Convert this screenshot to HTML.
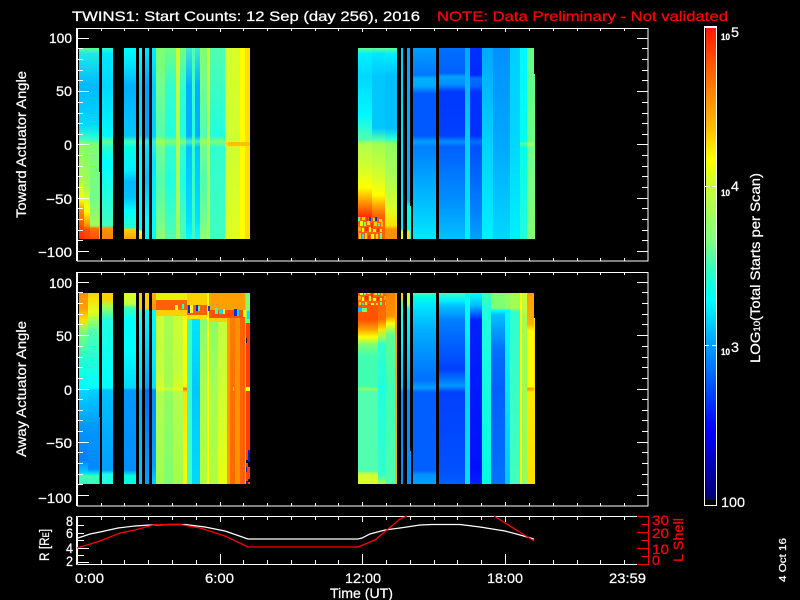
<!DOCTYPE html>
<html><head><meta charset="utf-8"><title>TWINS1 Start Counts</title>
<style>
html,body{margin:0;padding:0;background:#000;width:800px;height:600px;overflow:hidden}
svg{display:block}
text{font-family:"Liberation Sans",sans-serif;font-size:14px;fill:#fff;stroke:#fff;stroke-width:.25}
.r{fill:#f00;stroke:#f00}
.s{font-size:9px;font-weight:bold}
.d rect{shape-rendering:crispEdges}
path{fill:none}
.c{shape-rendering:crispEdges;stroke:#fff;stroke-width:1}
</style></head><body>
<svg width="800" height="600" viewBox="0 0 800 600" xmlns="http://www.w3.org/2000/svg">
<defs>
<linearGradient id="cb" x2="0" y2="1"><stop offset="0" stop-color="#ff1800"/><stop offset=".13" stop-color="#ff8000"/><stop offset=".21" stop-color="#ffbb00"/><stop offset=".28" stop-color="#ffff00"/><stop offset=".335" stop-color="#c8ff30"/><stop offset=".45" stop-color="#80ff80"/><stop offset=".51" stop-color="#30ffc0"/><stop offset=".575" stop-color="#00ffff"/><stop offset=".67" stop-color="#00a0ff"/><stop offset=".85" stop-color="#0000ff"/><stop offset="1" stop-color="#000070"/></linearGradient>

<linearGradient id="t1" x2="0" y2="1"><stop offset="0" stop-color="#60ff90"/><stop offset=".03" stop-color="#20e8e8"/><stop offset=".2" stop-color="#00b8ff"/><stop offset=".4" stop-color="#00d8ff"/><stop offset=".48" stop-color="#40ffc0"/><stop offset=".5" stop-color="#90ff60"/><stop offset=".675" stop-color="#a0ff50"/><stop offset=".795" stop-color="#ffff00"/><stop offset=".85" stop-color="#ff9000"/><stop offset=".95" stop-color="#ff4000"/><stop offset="1" stop-color="#ff3000"/></linearGradient>
<linearGradient id="t2" x2="0" y2="1"><stop offset="0" stop-color="#60ff90"/><stop offset=".03" stop-color="#20e8e8"/><stop offset=".2" stop-color="#00b8ff"/><stop offset=".4" stop-color="#00d8ff"/><stop offset=".48" stop-color="#40ffc0"/><stop offset=".5" stop-color="#80ff70"/><stop offset=".72" stop-color="#a0ff50"/><stop offset=".85" stop-color="#ffff00"/><stop offset=".93" stop-color="#ff9000"/><stop offset=".95" stop-color="#ff5000"/><stop offset="1" stop-color="#ff4000"/></linearGradient>
<linearGradient id="t3" x2="0" y2="1"><stop offset="0" stop-color="#60ff90"/><stop offset=".03" stop-color="#20e8e8"/><stop offset=".2" stop-color="#00b8ff"/><stop offset=".4" stop-color="#00d8ff"/><stop offset=".48" stop-color="#30ffd0"/><stop offset=".5" stop-color="#80ff70"/><stop offset=".78" stop-color="#70ff90"/><stop offset=".93" stop-color="#a0ff50"/><stop offset=".945" stop-color="#ff7000"/><stop offset="1" stop-color="#ff5000"/></linearGradient>
<linearGradient id="t4" x2="0" y2="1"><stop offset="0" stop-color="#30ffd0"/><stop offset=".03" stop-color="#00e8ff"/><stop offset=".2" stop-color="#00d8ff"/><stop offset=".46" stop-color="#00f8ff"/><stop offset=".49" stop-color="#60ff90"/><stop offset=".52" stop-color="#20ffd0"/><stop offset=".6" stop-color="#00ffff"/><stop offset=".93" stop-color="#40ffc0"/><stop offset=".945" stop-color="#ff9000"/><stop offset="1" stop-color="#ff8000"/></linearGradient>
<linearGradient id="t5" x2="0" y2="1"><stop offset="0" stop-color="#00ffff"/><stop offset=".1" stop-color="#00e0ff"/><stop offset=".2" stop-color="#00b0ff"/><stop offset=".46" stop-color="#00c8ff"/><stop offset=".49" stop-color="#40ffc0"/><stop offset=".52" stop-color="#00ffe0"/><stop offset=".64" stop-color="#00f0ff"/><stop offset=".7" stop-color="#00b8ff"/><stop offset=".78" stop-color="#00c0ff"/><stop offset=".85" stop-color="#00ffff"/><stop offset=".94" stop-color="#20ffd0"/><stop offset=".95" stop-color="#ffd000"/><stop offset="1" stop-color="#ffa000"/></linearGradient>
<linearGradient id="t6" x2="0" y2="1"><stop offset="0" stop-color="#00ffff"/><stop offset=".2" stop-color="#00d8ff"/><stop offset=".46" stop-color="#00e0ff"/><stop offset=".49" stop-color="#40ffc0"/><stop offset=".52" stop-color="#00ffff"/><stop offset=".95" stop-color="#00ffff"/><stop offset=".96" stop-color="#ffff00"/><stop offset="1" stop-color="#ffd000"/></linearGradient>
<linearGradient id="t7" x2="0" y2="1"><stop offset="0" stop-color="#00e8ff"/><stop offset=".2" stop-color="#00a0ff"/><stop offset=".46" stop-color="#00a0ff"/><stop offset=".49" stop-color="#30e8e0"/><stop offset=".52" stop-color="#00e0ff"/><stop offset=".7" stop-color="#00c0ff"/><stop offset=".9" stop-color="#00ffff"/><stop offset="1" stop-color="#00ffff"/></linearGradient>
<linearGradient id="t8" x2="0" y2="1"><stop offset="0" stop-color="#00f0ff"/><stop offset=".2" stop-color="#00d0ff"/><stop offset=".46" stop-color="#00d0ff"/><stop offset=".49" stop-color="#30f0e0"/><stop offset=".6" stop-color="#00e8ff"/><stop offset="1" stop-color="#00ffff"/></linearGradient>
<linearGradient id="t9" x2="0" y2="1"><stop offset="0" stop-color="#80ff70"/><stop offset=".2" stop-color="#70ff90"/><stop offset=".46" stop-color="#50ffb0"/><stop offset=".49" stop-color="#a0ff50"/><stop offset=".52" stop-color="#70ff90"/><stop offset=".7" stop-color="#50ffb0"/><stop offset=".9" stop-color="#70ff90"/><stop offset="1" stop-color="#90ff70"/></linearGradient>
<linearGradient id="t9b" x2="0" y2="1"><stop offset="0" stop-color="#70ff80"/><stop offset=".2" stop-color="#30ffd0"/><stop offset=".46" stop-color="#20ffe0"/><stop offset=".49" stop-color="#80ff70"/><stop offset=".52" stop-color="#30ffd0"/><stop offset=".7" stop-color="#20ffe0"/><stop offset="1" stop-color="#50ffb0"/></linearGradient>
<linearGradient id="t10" x2="0" y2="1"><stop offset="0" stop-color="#d0ff30"/><stop offset=".5" stop-color="#b0ff50"/><stop offset="1" stop-color="#a0ff60"/></linearGradient>
<linearGradient id="t12" x2="0" y2="1"><stop offset="0" stop-color="#40e8d0"/><stop offset=".2" stop-color="#00b0ff"/><stop offset=".46" stop-color="#00b0ff"/><stop offset=".49" stop-color="#40f0d0"/><stop offset=".52" stop-color="#00c0ff"/><stop offset=".9" stop-color="#00e0ff"/><stop offset="1" stop-color="#00ffff"/></linearGradient>
<linearGradient id="t13" x2="0" y2="1"><stop offset="0" stop-color="#50ffb0"/><stop offset=".46" stop-color="#20ffe0"/><stop offset=".49" stop-color="#80ff70"/><stop offset=".52" stop-color="#30ffd0"/><stop offset="1" stop-color="#40ffc0"/></linearGradient>
<linearGradient id="t16" x2="0" y2="1"><stop offset="0" stop-color="#d8ff28"/><stop offset=".49" stop-color="#d0ff30"/><stop offset=".5" stop-color="#ffd000"/><stop offset=".52" stop-color="#d0ff30"/><stop offset="1" stop-color="#e0ff20"/></linearGradient>

<linearGradient id="s1" x2="0" y2="1"><stop offset="0" stop-color="#60ff90"/><stop offset=".03" stop-color="#00f0ff"/><stop offset=".15" stop-color="#00d8ff"/><stop offset=".35" stop-color="#00f8ff"/><stop offset=".48" stop-color="#50ffb0"/><stop offset=".5" stop-color="#b0ff50"/><stop offset=".62" stop-color="#d0ff30"/><stop offset=".73" stop-color="#ffff00"/><stop offset=".8" stop-color="#ffa000"/><stop offset=".88" stop-color="#ff3000"/><stop offset="1" stop-color="#ff5000"/></linearGradient>
<linearGradient id="s2" x2="0" y2="1"><stop offset="0" stop-color="#60ff90"/><stop offset=".03" stop-color="#00e8ff"/><stop offset=".15" stop-color="#00c8ff"/><stop offset=".42" stop-color="#00c8ff"/><stop offset=".48" stop-color="#50ffb0"/><stop offset=".5" stop-color="#a0ff50"/><stop offset=".66" stop-color="#d0ff30"/><stop offset=".77" stop-color="#ffff00"/><stop offset=".83" stop-color="#ffa000"/><stop offset=".88" stop-color="#ff6000"/><stop offset="1" stop-color="#ff6000"/></linearGradient>
<linearGradient id="s3" x2="0" y2="1"><stop offset="0" stop-color="#60ff90"/><stop offset=".03" stop-color="#00f0ff"/><stop offset=".15" stop-color="#00c0ff"/><stop offset=".42" stop-color="#00c0ff"/><stop offset=".48" stop-color="#30ffd0"/><stop offset=".5" stop-color="#90ff60"/><stop offset=".7" stop-color="#b0ff50"/><stop offset=".85" stop-color="#e0ff20"/><stop offset=".93" stop-color="#ffe000"/><stop offset=".95" stop-color="#ff9000"/><stop offset="1" stop-color="#ff9000"/></linearGradient>
<linearGradient id="s4" x2="0" y2="1"><stop offset="0" stop-color="#00d0ff"/><stop offset=".95" stop-color="#00e8ff"/><stop offset=".96" stop-color="#e8ff10"/><stop offset="1" stop-color="#f0ff00"/></linearGradient>
<linearGradient id="s5" x2="0" y2="1"><stop offset="0" stop-color="#00a8ff"/><stop offset=".8" stop-color="#00b0ff"/><stop offset=".83" stop-color="#00ffe0"/><stop offset=".95" stop-color="#00ffe0"/><stop offset=".96" stop-color="#ffe000"/><stop offset="1" stop-color="#ffe000"/></linearGradient>
<linearGradient id="s6" x2="0" y2="1"><stop offset="0" stop-color="#00a0ff"/><stop offset=".14" stop-color="#0078ff"/><stop offset=".16" stop-color="#00b0ff"/><stop offset=".2" stop-color="#00a8ff"/><stop offset=".24" stop-color="#0058ff"/><stop offset=".46" stop-color="#0058ff"/><stop offset=".49" stop-color="#00a0ff"/><stop offset=".52" stop-color="#0080ff"/><stop offset=".7" stop-color="#00a8ff"/><stop offset=".85" stop-color="#00c8ff"/><stop offset="1" stop-color="#00e8ff"/></linearGradient>
<linearGradient id="s7" x2="0" y2="1"><stop offset="0" stop-color="#0070ff"/><stop offset=".13" stop-color="#0060ff"/><stop offset=".15" stop-color="#00a0ff"/><stop offset=".19" stop-color="#0090ff"/><stop offset=".23" stop-color="#0038ff"/><stop offset=".46" stop-color="#0040ff"/><stop offset=".49" stop-color="#0090ff"/><stop offset=".52" stop-color="#0060ff"/><stop offset=".8" stop-color="#0090ff"/><stop offset="1" stop-color="#00c0ff"/></linearGradient>
<linearGradient id="s8" x2="0" y2="1"><stop offset="0" stop-color="#00a8ff"/><stop offset=".49" stop-color="#00d0ff"/><stop offset="1" stop-color="#00f0ff"/></linearGradient>
<linearGradient id="s9" x2="0" y2="1"><stop offset="0" stop-color="#0030ff"/><stop offset=".14" stop-color="#0028ff"/><stop offset=".16" stop-color="#0070ff"/><stop offset=".2" stop-color="#0060ff"/><stop offset=".23" stop-color="#0030ff"/><stop offset=".46" stop-color="#0030ff"/><stop offset=".49" stop-color="#0070ff"/><stop offset=".52" stop-color="#0050ff"/><stop offset=".85" stop-color="#0080ff"/><stop offset="1" stop-color="#00a0ff"/></linearGradient>
<linearGradient id="s10" x2="0" y2="1"><stop offset="0" stop-color="#0090ff"/><stop offset=".5" stop-color="#00a8ff"/><stop offset="1" stop-color="#00d8ff"/></linearGradient>
<linearGradient id="s11" x2="0" y2="1"><stop offset="0" stop-color="#00d0ff"/><stop offset=".5" stop-color="#00d8ff"/><stop offset="1" stop-color="#00f0ff"/></linearGradient>
<linearGradient id="s12" x2="0" y2="1"><stop offset="0" stop-color="#00f8ff"/><stop offset=".49" stop-color="#00ffe8"/><stop offset=".5" stop-color="#60ff90"/><stop offset=".52" stop-color="#00ffe8"/><stop offset="1" stop-color="#20ffd8"/></linearGradient>
<linearGradient id="s13" x2="0" y2="1"><stop offset="0" stop-color="#60ff90"/><stop offset=".49" stop-color="#70ff80"/><stop offset=".5" stop-color="#c0ff40"/><stop offset=".52" stop-color="#70ff90"/><stop offset="1" stop-color="#80ff70"/></linearGradient>

<linearGradient id="b1" x2="0" y2="1"><stop offset="0" stop-color="#ff9000"/><stop offset=".08" stop-color="#ffa000"/><stop offset=".14" stop-color="#ffe000"/><stop offset=".2" stop-color="#80ff70"/><stop offset=".35" stop-color="#20ffd0"/><stop offset=".497" stop-color="#00ffff"/><stop offset=".508" stop-color="#00d8ff"/><stop offset=".7" stop-color="#0098ff"/><stop offset=".874" stop-color="#0080ff"/><stop offset=".94" stop-color="#00d0ff"/><stop offset=".958" stop-color="#40ffb0"/><stop offset="1" stop-color="#30ffc0"/></linearGradient>
<linearGradient id="b1b" x2="0" y2="1"><stop offset="0" stop-color="#ffd000"/><stop offset=".1" stop-color="#e0ff20"/><stop offset=".2" stop-color="#50ffb0"/><stop offset=".35" stop-color="#20ffd8"/><stop offset=".497" stop-color="#00ffff"/><stop offset=".508" stop-color="#00d0ff"/><stop offset=".7" stop-color="#0098ff"/><stop offset=".92" stop-color="#0088ff"/><stop offset=".94" stop-color="#00d0ff"/><stop offset=".958" stop-color="#40ffb0"/><stop offset="1" stop-color="#30ffc0"/></linearGradient>
<linearGradient id="b2" x2="0" y2="1"><stop offset="0" stop-color="#ffd000"/><stop offset=".03" stop-color="#ffd000"/><stop offset=".07" stop-color="#a0ff50"/><stop offset=".14" stop-color="#20ffe0"/><stop offset=".497" stop-color="#00ffff"/><stop offset=".508" stop-color="#00c0ff"/><stop offset=".927" stop-color="#00a0ff"/><stop offset=".95" stop-color="#20ffe0"/><stop offset="1" stop-color="#20ffe0"/></linearGradient>
<linearGradient id="b3" x2="0" y2="1"><stop offset="0" stop-color="#e0ff20"/><stop offset=".06" stop-color="#c0ff40"/><stop offset=".075" stop-color="#40ffb0"/><stop offset=".14" stop-color="#00ffff"/><stop offset=".3" stop-color="#00ffff"/><stop offset=".497" stop-color="#00d8ff"/><stop offset=".508" stop-color="#0098ff"/><stop offset=".927" stop-color="#0090ff"/><stop offset=".958" stop-color="#00ffe0"/><stop offset="1" stop-color="#00ffe0"/></linearGradient>
<linearGradient id="b4" x2="0" y2="1"><stop offset="0" stop-color="#ffd000"/><stop offset=".085" stop-color="#ffd000"/><stop offset=".09" stop-color="#30ffd0"/><stop offset=".19" stop-color="#00ffff"/><stop offset=".497" stop-color="#00e0ff"/><stop offset=".508" stop-color="#00b0ff"/><stop offset="1" stop-color="#00c8ff"/></linearGradient>
<linearGradient id="b5" x2="0" y2="1"><stop offset="0" stop-color="#ffd000"/><stop offset=".085" stop-color="#ffd000"/><stop offset=".09" stop-color="#00ffff"/><stop offset=".3" stop-color="#00d0ff"/><stop offset=".497" stop-color="#00a0ff"/><stop offset=".508" stop-color="#0070ff"/><stop offset="1" stop-color="#00a0ff"/></linearGradient>
<linearGradient id="b6" x2="0" y2="1"><stop offset="0" stop-color="#ffb000"/><stop offset=".085" stop-color="#ff9000"/><stop offset=".09" stop-color="#00ffff"/><stop offset=".497" stop-color="#00e0ff"/><stop offset=".508" stop-color="#0090ff"/><stop offset=".9" stop-color="#00a0ff"/><stop offset="1" stop-color="#00d0ff"/></linearGradient>
<linearGradient id="b7" x2="0" y2="1"><stop offset="0" stop-color="#d0ff30"/><stop offset=".4" stop-color="#c0ff40"/><stop offset=".49" stop-color="#d0ff30"/><stop offset=".5" stop-color="#e8ff10"/><stop offset=".52" stop-color="#b0ff50"/><stop offset="1" stop-color="#a0ff50"/></linearGradient>
<linearGradient id="b7b" x2="0" y2="1"><stop offset="0" stop-color="#a8ff50"/><stop offset=".49" stop-color="#a0ff50"/><stop offset=".5" stop-color="#d0ff30"/><stop offset=".52" stop-color="#90ff60"/><stop offset="1" stop-color="#80ff70"/></linearGradient>
<linearGradient id="b8" x2="0" y2="1"><stop offset="0" stop-color="#ffff00"/><stop offset=".49" stop-color="#f0ff00"/><stop offset=".5" stop-color="#ff7000"/><stop offset=".52" stop-color="#ffe000"/><stop offset="1" stop-color="#f0ff10"/></linearGradient>
<linearGradient id="b9" x2="0" y2="1"><stop offset="0" stop-color="#40ffb0"/><stop offset=".5" stop-color="#30ffd0"/><stop offset="1" stop-color="#40ffc0"/></linearGradient>
<linearGradient id="b10" x2="0" y2="1"><stop offset="0" stop-color="#00f0ff"/><stop offset=".5" stop-color="#00c8ff"/><stop offset="1" stop-color="#00d8ff"/></linearGradient>
<linearGradient id="b11" x2="0" y2="1"><stop offset="0" stop-color="#80ff70"/><stop offset=".5" stop-color="#a8ff50"/><stop offset="1" stop-color="#b0ff40"/></linearGradient>
<linearGradient id="b12" x2="0" y2="1"><stop offset="0" stop-color="#c0ff40"/><stop offset=".5" stop-color="#d0ff30"/><stop offset="1" stop-color="#e8ff10"/></linearGradient>
<linearGradient id="b13" x2="0" y2="1"><stop offset="0" stop-color="#ff8000"/><stop offset=".5" stop-color="#ff7000"/><stop offset="1" stop-color="#ff6800"/></linearGradient>

<linearGradient id="c1" x2="0" y2="1"><stop offset="0" stop-color="#ff6000"/><stop offset=".14" stop-color="#ff5000"/><stop offset=".19" stop-color="#ffa000"/><stop offset=".23" stop-color="#ffff00"/><stop offset=".27" stop-color="#80ff70"/><stop offset=".33" stop-color="#40ffb0"/><stop offset=".49" stop-color="#40ffb0"/><stop offset=".5" stop-color="#90ff60"/><stop offset=".52" stop-color="#50ffb0"/><stop offset=".93" stop-color="#50ffb0"/><stop offset=".95" stop-color="#d0ff30"/><stop offset="1" stop-color="#e0ff20"/></linearGradient>
<linearGradient id="c2" x2="0" y2="1"><stop offset="0" stop-color="#ff6000"/><stop offset=".14" stop-color="#ff7000"/><stop offset=".19" stop-color="#ffe000"/><stop offset=".23" stop-color="#a0ff50"/><stop offset=".27" stop-color="#30ffd0"/><stop offset=".5" stop-color="#20ffe0"/><stop offset=".95" stop-color="#30ffd0"/><stop offset="1" stop-color="#a0ff50"/></linearGradient>
<linearGradient id="c3" x2="0" y2="1"><stop offset="0" stop-color="#ff8000"/><stop offset=".12" stop-color="#ff9000"/><stop offset=".16" stop-color="#ffff00"/><stop offset=".22" stop-color="#60ff90"/><stop offset=".5" stop-color="#40ffb0"/><stop offset="1" stop-color="#50ffb0"/></linearGradient>
<linearGradient id="c4" x2="0" y2="1"><stop offset="0" stop-color="#ffa000"/><stop offset="1" stop-color="#ffb000"/></linearGradient>
<linearGradient id="c5" x2="0" y2="1"><stop offset="0" stop-color="#ffd000"/><stop offset=".035" stop-color="#ffd000"/><stop offset=".05" stop-color="#40ffb0"/><stop offset=".2" stop-color="#00ffff"/><stop offset=".5" stop-color="#00c0ff"/><stop offset=".51" stop-color="#0090ff"/><stop offset="1" stop-color="#0090ff"/></linearGradient>
<linearGradient id="c6" x2="0" y2="1"><stop offset="0" stop-color="#c0ff40"/><stop offset=".06" stop-color="#d0ff30"/><stop offset=".08" stop-color="#00ffff"/><stop offset=".3" stop-color="#00d8ff"/><stop offset=".5" stop-color="#00b0ff"/><stop offset=".51" stop-color="#0090ff"/><stop offset="1" stop-color="#0090ff"/></linearGradient>
<linearGradient id="c7" x2="0" y2="1"><stop offset="0" stop-color="#50ffb0"/><stop offset=".02" stop-color="#00ffe0"/><stop offset=".06" stop-color="#00e8ff"/><stop offset=".19" stop-color="#00b0ff"/><stop offset=".455" stop-color="#0070ff"/><stop offset=".497" stop-color="#00a0ff"/><stop offset=".518" stop-color="#0060ff"/><stop offset=".93" stop-color="#0060ff"/><stop offset=".95" stop-color="#0090ff"/><stop offset="1" stop-color="#00a0ff"/></linearGradient>
<linearGradient id="c8" x2="0" y2="1"><stop offset="0" stop-color="#40ffc0"/><stop offset=".04" stop-color="#00f0ff"/><stop offset=".063" stop-color="#00c8ff"/><stop offset=".14" stop-color="#0080ff"/><stop offset=".4" stop-color="#0040ff"/><stop offset=".487" stop-color="#0098ff"/><stop offset=".518" stop-color="#0040ff"/><stop offset=".927" stop-color="#0050ff"/><stop offset="1" stop-color="#0060ff"/></linearGradient>
<linearGradient id="c9" x2="0" y2="1"><stop offset="0" stop-color="#00ffe0"/><stop offset=".06" stop-color="#00ffff"/><stop offset=".5" stop-color="#00d8ff"/><stop offset="1" stop-color="#00e0ff"/></linearGradient>
<linearGradient id="c10" x2="0" y2="1"><stop offset="0" stop-color="#00ffff"/><stop offset=".063" stop-color="#00c0ff"/><stop offset=".141" stop-color="#0020ff"/><stop offset=".927" stop-color="#0010ff"/><stop offset="1" stop-color="#0020ff"/></linearGradient>
<linearGradient id="c11" x2="0" y2="1"><stop offset="0" stop-color="#40ffb0"/><stop offset=".08" stop-color="#20ffe0"/><stop offset="1" stop-color="#00ffe0"/></linearGradient>
<linearGradient id="c12" x2="0" y2="1"><stop offset="0" stop-color="#80ff70"/><stop offset=".08" stop-color="#80ff70"/><stop offset=".09" stop-color="#00ffff"/><stop offset=".115" stop-color="#00c0ff"/><stop offset=".3" stop-color="#0070ff"/><stop offset=".5" stop-color="#0060ff"/><stop offset="1" stop-color="#0070ff"/></linearGradient>
<linearGradient id="c13" x2="0" y2="1"><stop offset="0" stop-color="#90ff60"/><stop offset=".08" stop-color="#90ff60"/><stop offset=".09" stop-color="#00ffff"/><stop offset="1" stop-color="#00c8ff"/></linearGradient>
<linearGradient id="c14" x2="0" y2="1"><stop offset="0" stop-color="#a0ff50"/><stop offset=".08" stop-color="#a0ff50"/><stop offset=".1" stop-color="#30ffd0"/><stop offset="1" stop-color="#40ffc0"/></linearGradient>
<linearGradient id="c15" x2="0" y2="1"><stop offset="0" stop-color="#d0ff30"/><stop offset=".08" stop-color="#c0ff40"/><stop offset=".12" stop-color="#a0ff50"/><stop offset="1" stop-color="#90ff60"/></linearGradient>
<linearGradient id="c16" x2="0" y2="1"><stop offset="0" stop-color="#ffa000"/><stop offset=".16" stop-color="#ffb000"/><stop offset=".2" stop-color="#ffff00"/><stop offset=".49" stop-color="#ffff00"/><stop offset=".5" stop-color="#ffa000"/><stop offset=".52" stop-color="#ffe800"/><stop offset="1" stop-color="#ffe000"/></linearGradient>

<pattern id="n" patternUnits="userSpaceOnUse" x="358" y="217" width="26" height="22">
<rect width="26" height="22" fill="#ff6000"/>
<rect x="0" y="0" width="2" height="4" fill="#40ffb0"/><rect x="4" y="0" width="3" height="3" fill="#ffd000"/><rect x="8" y="0" width="2" height="4" fill="#ff3000"/><rect x="11" y="0" width="2" height="4" fill="#0040ff"/><rect x="15" y="1" width="2" height="3" fill="#ffd000"/><rect x="17" y="0" width="2" height="4" fill="#1020d0"/><rect x="21" y="2" width="3" height="3" fill="#ffd000"/>
<rect x="2" y="4" width="3" height="5" fill="#ffff00"/><rect x="6" y="5" width="2" height="4" fill="#80ff70"/><rect x="9" y="4" width="3" height="4" fill="#ffe000"/><rect x="13" y="6" width="2" height="5" fill="#ff3000"/><rect x="16" y="5" width="3" height="4" fill="#ffd000"/><rect x="20" y="6" width="2" height="3" fill="#40ffb0"/><rect x="23" y="4" width="2" height="6" fill="#ffb000"/>
<rect x="0" y="10" width="3" height="4" fill="#ffa000"/><rect x="4" y="11" width="2" height="4" fill="#ffff00"/><rect x="7" y="10" width="3" height="4" fill="#ff3000"/><rect x="11" y="10" width="2" height="5" fill="#d0ff30"/><rect x="15" y="12" width="3" height="3" fill="#ffff00"/><rect x="19" y="11" width="2" height="4" fill="#ff3000"/><rect x="22" y="12" width="2" height="3" fill="#ffe000"/>
<rect x="1" y="16" width="2" height="6" fill="#ffd000"/><rect x="4" y="17" width="2" height="5" fill="#40d0ff"/><rect x="7" y="16" width="2" height="6" fill="#ffe000"/><rect x="10" y="18" width="2" height="4" fill="#ff3000"/><rect x="13" y="17" width="3" height="5" fill="#ffff00"/><rect x="18" y="17" width="2" height="5" fill="#ffd000"/><rect x="22" y="16" width="2" height="6" fill="#50ffb0"/>
</pattern>
</defs>

<g class="d">
<!-- TOP PANEL DATA -->
<g id="x">
<rect x="79" y="48" width="5" height="191" fill="url(#t1)"/><rect x="84" y="48" width="6" height="191" fill="url(#t2)"/><rect x="90" y="48" width="9" height="191" fill="url(#t3)"/>
<rect x="99" y="172" width="1" height="67" fill="#30ffd0"/>
<rect x="102" y="48" width="11" height="191" fill="url(#t4)"/>
<rect x="124" y="48" width="12" height="191" fill="url(#t5)"/>
<rect x="139" y="48" width="3" height="191" fill="url(#t6)"/>
<rect x="145" y="48" width="4" height="191" fill="url(#t7)"/>
<rect x="152" y="48" width="4" height="191" fill="url(#t8)"/>
<rect x="156" y="48" width="9" height="191" fill="url(#t9)"/><rect x="165" y="48" width="11" height="191" fill="url(#t9b)"/>
<rect x="176" y="48" width="4" height="191" fill="url(#t10)"/><rect x="180" y="48" width="6" height="191" fill="url(#t9b)"/>
<rect x="186" y="48" width="6" height="191" fill="url(#t12)"/><rect x="192" y="48" width="3" height="191" fill="url(#t13)"/><rect x="195" y="48" width="5" height="191" fill="url(#t12)"/>
<rect x="200" y="48" width="7" height="191" fill="url(#t9)"/><rect x="207" y="48" width="3" height="191" fill="url(#t10)"/>
<rect x="210" y="48" width="15" height="191" fill="url(#t13)"/>
<rect x="225" y="48" width="15" height="191" fill="url(#t16)"/><rect x="240" y="48" width="5" height="191" fill="#ffff00"/><rect x="245" y="48" width="5" height="191" fill="#ffe000"/>
<rect x="228" y="142" width="22" height="4" fill="#ffc000"/>

<rect x="358" y="48" width="14" height="191" fill="url(#s1)"/><rect x="372" y="48" width="13" height="191" fill="url(#s2)"/><rect x="385" y="48" width="12" height="191" fill="url(#s3)"/>
<rect x="358" y="217" width="26" height="22" fill="url(#n)"/>
<rect x="401" y="48" width="2" height="191" fill="url(#s4)"/><rect x="407" y="48" width="3" height="191" fill="url(#s5)"/>
<rect x="410" y="206" width="1" height="33" fill="#00ffe0"/>
<rect x="413" y="48" width="23" height="191" fill="url(#s6)"/><rect x="439" y="48" width="26" height="191" fill="url(#s7)"/>
<rect x="465" y="48" width="5" height="191" fill="url(#s8)"/><rect x="470" y="48" width="12" height="191" fill="url(#s9)"/>
<rect x="482" y="48" width="11" height="191" fill="url(#s8)"/><rect x="493" y="48" width="17" height="191" fill="url(#s10)"/>
<rect x="510" y="48" width="10" height="191" fill="url(#s11)"/><rect x="520" y="48" width="7" height="191" fill="url(#s12)"/>
<rect x="527" y="48" width="7" height="191" fill="url(#s13)"/><rect x="534" y="74" width="1" height="165" fill="url(#s13)"/>
</g>

<!-- BOTTOM PANEL DATA -->
<g transform="translate(0,245)">
<rect x="79" y="48" width="9" height="191" fill="url(#b1)"/><rect x="88" y="48" width="11" height="191" fill="url(#b1b)"/>
<rect x="99" y="172" width="1" height="67" fill="#0090ff"/>
<rect x="102" y="48" width="11" height="191" fill="url(#b2)"/>
<rect x="124" y="48" width="12" height="191" fill="url(#b3)"/>
<rect x="139" y="48" width="3" height="191" fill="url(#b4)"/>
<rect x="145" y="48" width="4" height="191" fill="url(#b5)"/>
<rect x="152" y="48" width="4" height="191" fill="url(#b6)"/>
<rect x="156" y="48" width="8" height="191" fill="url(#b7)"/><rect x="164" y="48" width="9" height="191" fill="url(#b7b)"/><rect x="173" y="48" width="10" height="191" fill="url(#b7)"/>
<rect x="183" y="48" width="4" height="191" fill="url(#b8)"/><rect x="187" y="48" width="5" height="191" fill="url(#b9)"/>
<rect x="192" y="48" width="8" height="191" fill="url(#b10)"/><rect x="200" y="48" width="7" height="191" fill="url(#b11)"/>
<rect x="207" y="48" width="2" height="191" fill="#ffff00"/><rect x="209" y="48" width="9" height="191" fill="url(#b11)"/><rect x="218" y="48" width="9" height="191" fill="url(#b12)"/>
<rect x="227" y="48" width="3" height="191" fill="#ffa000"/><rect x="230" y="48" width="5" height="191" fill="url(#b13)"/><rect x="235" y="48" width="5" height="191" fill="#ff9000"/><rect x="240" y="48" width="5" height="191" fill="#ff6000"/>
<rect x="245" y="48" width="1" height="191" fill="#40ffb0"/><rect x="246" y="48" width="4" height="191" fill="#ff4000"/>
<!-- upper band -->
<rect x="156" y="48" width="31" height="7" fill="#e8f000"/><rect x="156" y="55" width="31" height="10" fill="#ff6000"/><rect x="156" y="65" width="31" height="6" fill="#ffd000"/>
<rect x="187" y="48" width="20" height="12" fill="#ffd000"/><rect x="187" y="60" width="20" height="10" fill="#ff6000"/><rect x="187" y="70" width="20" height="4" fill="#ffe000"/>
<rect x="209" y="48" width="36" height="17" fill="#ffa000"/><rect x="209" y="65" width="36" height="8" fill="#ff5000"/><rect x="209" y="73" width="18" height="4" fill="#ffd000"/>
<rect x="246" y="48" width="4" height="30" fill="#80ff70"/>
<rect x="175" y="60" width="3" height="5" fill="#ffff00"/>
<rect x="182" y="59" width="2" height="5" fill="#40ffb0"/><rect x="188" y="60" width="2" height="8" fill="#0030e0"/><rect x="190" y="60" width="3" height="8" fill="#ffff00"/><rect x="196" y="60" width="2" height="6" fill="#1020d0"/><rect x="198" y="61" width="2" height="5" fill="#40ffb0"/>
<rect x="208" y="61" width="2" height="5" fill="#0040e0"/><rect x="215" y="63" width="3" height="6" fill="#40ffb0"/><rect x="219" y="64" width="4" height="5" fill="#00e0ff"/><rect x="223" y="64" width="2" height="5" fill="#ffff00"/><rect x="234" y="64" width="3" height="7" fill="#0030e0"/><rect x="237" y="64" width="2" height="7" fill="#00e0ff"/><rect x="243" y="65" width="3" height="7" fill="#ffff00"/><rect x="247" y="66" width="3" height="8" fill="#00e0ff"/>
<rect x="246" y="93" width="1" height="5" fill="#000"/><rect x="233" y="142" width="1" height="4" fill="#40ffb0"/><rect x="246" y="142" width="4" height="4" fill="#ffff00"/>
<rect x="248" y="205" width="2" height="12" fill="#0020d0"/><rect x="246" y="215" width="2" height="3" fill="#000"/><rect x="248" y="217" width="2" height="5" fill="#000"/><rect x="246" y="222" width="1" height="5" fill="#0020d0"/><rect x="248" y="234" width="2" height="3" fill="#000"/><rect x="246" y="236" width="2" height="3" fill="#0020d0"/>

<rect x="358" y="48" width="20" height="191" fill="url(#c1)"/><rect x="378" y="48" width="8" height="191" fill="url(#c2)"/><rect x="386" y="48" width="9" height="191" fill="url(#c3)"/><rect x="395" y="48" width="2" height="191" fill="url(#c4)"/>
<rect x="358" y="48" width="28" height="12" fill="url(#n)"/>
<rect x="358" y="63" width="4" height="4" fill="#00c0ff"/><rect x="362" y="63" width="5" height="4" fill="#80ff70"/>
<rect x="401" y="48" width="2" height="191" fill="url(#c5)"/><rect x="407" y="48" width="3" height="191" fill="url(#c6)"/><rect x="410" y="206" width="1" height="33" fill="#0090ff"/>
<rect x="413" y="48" width="23" height="191" fill="url(#c7)"/><rect x="439" y="48" width="26" height="191" fill="url(#c8)"/>
<rect x="465" y="48" width="5" height="191" fill="url(#c9)"/><rect x="470" y="48" width="12" height="191" fill="url(#c10)"/>
<rect x="482" y="48" width="9" height="191" fill="url(#c11)"/><rect x="491" y="48" width="14" height="191" fill="url(#c12)"/>
<rect x="505" y="48" width="5" height="191" fill="url(#c13)"/><rect x="510" y="48" width="10" height="191" fill="url(#c14)"/>
<rect x="520" y="48" width="2" height="191" fill="#ffff00"/><rect x="522" y="48" width="5" height="191" fill="url(#c15)"/>
<rect x="527" y="48" width="7" height="191" fill="url(#c16)"/><rect x="534" y="73" width="1" height="166" fill="#ffe000"/>
</g>

<!-- COLOUR BAR -->
<rect x="706" y="28" width="10" height="472" fill="url(#cb)"/>
<rect x="706" y="500" width="10" height="5" fill="#000"/>
</g>

<!-- AXES -->
<path class="c" d="M77.5 28.5H648V261H77.5Z M77.5 272.5H648V506H77.5Z M77.5 516.5H648M77.5 564.5H648M77.5 516.5V564.5"/>
<path class="c" d="M76.5 28V261M76.5 272V506M76.5 516V565"/>
<path class="c" d="M704.5 26.5H716.5V505.5H704.5Z M705 27.5H716"/>
<path class="c" d="M705 186.5H709M712 186.5H716M705 345.5H709M712 345.5H716"/>
<path class="c" d="M101.5 28v3M124.5 28v3M148.5 28v3M172.5 28v3M196.5 28v3M220.5 28v4M243.5 28v3M267.5 28v3M291.5 28v3M315.5 28v3M338.5 28v3M362.5 28v4M386.5 28v3M410.5 28v3M434.5 28v3M457.5 28v3M481.5 28v3M505.5 28v4M529.5 28v3M553.5 28v3M577.5 28v3M600.5 28v3M624.5 28v3
M101.5 261v-3M124.5 261v-3M148.5 261v-3M172.5 261v-3M196.5 261v-3M220.5 261v-4M243.5 261v-3M267.5 261v-3M291.5 261v-3M315.5 261v-3M338.5 261v-3M362.5 261v-4M386.5 261v-3M410.5 261v-3M434.5 261v-3M457.5 261v-3M481.5 261v-3M505.5 261v-4M529.5 261v-3M553.5 261v-3M577.5 261v-3M600.5 261v-3M624.5 261v-3
M101.5 272v3M124.5 272v3M148.5 272v3M172.5 272v3M196.5 272v3M220.5 272v4M243.5 272v3M267.5 272v3M291.5 272v3M315.5 272v3M338.5 272v3M362.5 272v4M386.5 272v3M410.5 272v3M434.5 272v3M457.5 272v3M481.5 272v3M505.5 272v4M529.5 272v3M553.5 272v3M577.5 272v3M600.5 272v3M624.5 272v3
M101.5 506v-3M124.5 506v-3M148.5 506v-3M172.5 506v-3M196.5 506v-3M220.5 506v-4M243.5 506v-3M267.5 506v-3M291.5 506v-3M315.5 506v-3M338.5 506v-3M362.5 506v-4M386.5 506v-3M410.5 506v-3M434.5 506v-3M457.5 506v-3M481.5 506v-3M505.5 506v-4M529.5 506v-3M553.5 506v-3M577.5 506v-3M600.5 506v-3M624.5 506v-3
M101.5 516v4M124.5 516v4M148.5 516v4M172.5 516v4M196.5 516v4M220.5 516v6M243.5 516v4M267.5 516v4M291.5 516v4M315.5 516v4M338.5 516v4M362.5 516v6M386.5 516v4M410.5 516v4M434.5 516v4M457.5 516v4M481.5 516v4M505.5 516v6M529.5 516v4M553.5 516v4M577.5 516v4M600.5 516v4M624.5 516v4
M101.5 564v-4M124.5 564v-4M148.5 564v-4M172.5 564v-4M196.5 564v-4M220.5 564v-10M243.5 564v-4M267.5 564v-4M291.5 564v-4M315.5 564v-4M338.5 564v-4M362.5 564v-10M386.5 564v-4M410.5 564v-4M434.5 564v-4M457.5 564v-4M481.5 564v-4M505.5 564v-10M529.5 564v-4M553.5 564v-4M577.5 564v-4M600.5 564v-4M624.5 564v-4"/>
<g id="yt"><path class="c" d="M77 38.5h12M77 48.5h6M77 59.5h6M77 70.5h6M77 80.5h6M77 91.5h12M77 102.5h6M77 113.5h6M77 123.5h6M77 134.5h6M77 144.5h12M77 155.5h6M77 166.5h6M77 176.5h6M77 187.5h6M77 198.5h12M77 208.5h6M77 219.5h6M77 230.5h6M77 240.5h6M77 251.5h12
M648 38.5h-11M648 48.5h-6M648 59.5h-6M648 70.5h-6M648 80.5h-6M648 91.5h-11M648 102.5h-6M648 113.5h-6M648 123.5h-6M648 134.5h-6M648 144.5h-11M648 155.5h-6M648 166.5h-6M648 176.5h-6M648 187.5h-6M648 198.5h-11M648 208.5h-6M648 219.5h-6M648 230.5h-6M648 240.5h-6M648 251.5h-11"/></g>
<g transform="translate(0,244)"><path class="c" d="M77 38.5h12M77 48.5h6M77 59.5h6M77 70.5h6M77 80.5h6M77 91.5h12M77 102.5h6M77 113.5h6M77 123.5h6M77 134.5h6M77 145.5h12M77 155.5h6M77 166.5h6M77 176.5h6M77 187.5h6M77 198.5h12M77 208.5h6M77 219.5h6M77 230.5h6M77 240.5h6M77 251.5h12
M648 38.5h-11M648 48.5h-6M648 59.5h-6M648 70.5h-6M648 80.5h-6M648 91.5h-11M648 102.5h-6M648 113.5h-6M648 123.5h-6M648 134.5h-6M648 145.5h-11M648 155.5h-6M648 166.5h-6M648 176.5h-6M648 187.5h-6M648 198.5h-11M648 208.5h-6M648 219.5h-6M648 230.5h-6M648 240.5h-6M648 251.5h-11"/></g>
<path class="c" d="M77 525.5h7M77 533.5h7M77 540.5h7M77 548.5h12M77 555.5h7M77 562.5h12"/>

<!-- L-SHELL RED AXIS -->
<path d="M648.5 516V565M637 516.5h12M641 524.5h8M637 532.5h12M641 540.5h8M637 548.5h12M641 556.5h8M637 564.5h12" stroke="#f00" stroke-width="1" shape-rendering="crispEdges"/>

<!-- LINES -->
<polyline points="78,538 90,534 100,532 118,528 135,526 150,525 170,524.5 185,524.5 205,527 225,531 248,539 358,539 362,538 370,534 385,530 400,528 420,525 432,524.5 460,524.5 480,527 505,531 520,535 534,539" fill="none" stroke="#fff" stroke-width="1.2"/>
<polyline points="77,548 100,541 120,533 135,530 155,524.5 180,524.5 200,528 225,536 248,547 358,547 375,540 400,519 407,516" fill="none" stroke="#f00" stroke-width="1.3"/>
<polyline points="494,516 534,541" fill="none" stroke="#f00" stroke-width="1.3"/>

<!-- TEXT -->
<text x="72" y="21" textLength="348" lengthAdjust="spacingAndGlyphs">TWINS1: Start Counts: 12 Sep (day 256), 2016</text>
<text class="r" x="437" y="21" textLength="291" lengthAdjust="spacingAndGlyphs">NOTE: Data Preliminary - Not validated</text>

<text x="49" y="43" textLength="23" lengthAdjust="spacingAndGlyphs">100</text>
<text x="56" y="96" textLength="16" lengthAdjust="spacingAndGlyphs">50</text>
<text x="64" y="150" textLength="8" lengthAdjust="spacingAndGlyphs">0</text>
<text x="46" y="204" textLength="26" lengthAdjust="spacingAndGlyphs">−50</text>
<text x="38" y="257" textLength="34" lengthAdjust="spacingAndGlyphs">−100</text>

<text x="49" y="288" textLength="23" lengthAdjust="spacingAndGlyphs">100</text>
<text x="56" y="341" textLength="16" lengthAdjust="spacingAndGlyphs">50</text>
<text x="64" y="395" textLength="8" lengthAdjust="spacingAndGlyphs">0</text>
<text x="46" y="448" textLength="26" lengthAdjust="spacingAndGlyphs">−50</text>
<text x="38" y="503" textLength="34" lengthAdjust="spacingAndGlyphs">−100</text>

<text transform="translate(26,218) rotate(-90)" textLength="147" lengthAdjust="spacingAndGlyphs">Toward Actuator Angle</text>
<text transform="translate(26,457) rotate(-90)" textLength="136" lengthAdjust="spacingAndGlyphs">Away Actuator Angle</text>

<text x="66" y="526" textLength="7" lengthAdjust="spacingAndGlyphs">8</text>
<text x="66" y="538" textLength="7" lengthAdjust="spacingAndGlyphs">6</text>
<text x="66" y="553" textLength="7" lengthAdjust="spacingAndGlyphs">4</text>
<text x="66" y="566" textLength="7" lengthAdjust="spacingAndGlyphs">2</text>
<text transform="translate(49,561) rotate(-90)" textLength="32" lengthAdjust="spacingAndGlyphs">R [R<tspan font-size="9">E</tspan>]</text>

<text x="75" y="583" textLength="29" lengthAdjust="spacingAndGlyphs">0:00</text>
<text x="205" y="583" textLength="29" lengthAdjust="spacingAndGlyphs">6:00</text>
<text x="345" y="583" textLength="36" lengthAdjust="spacingAndGlyphs">12:00</text>
<text x="487" y="583" textLength="36" lengthAdjust="spacingAndGlyphs">18:00</text>
<text x="609" y="583" textLength="37" lengthAdjust="spacingAndGlyphs">23:59</text>
<text x="330" y="598" textLength="63" lengthAdjust="spacingAndGlyphs">Time (UT)</text>

<text class="r" x="652" y="525" textLength="17" lengthAdjust="spacingAndGlyphs">30</text>
<text class="r" x="652" y="538" textLength="17" lengthAdjust="spacingAndGlyphs">20</text>
<text class="r" x="652" y="554" textLength="17" lengthAdjust="spacingAndGlyphs">10</text>
<text class="r" x="652" y="565" textLength="8" lengthAdjust="spacingAndGlyphs">0</text>
<text class="r" transform="translate(683,562) rotate(-90)" textLength="44" lengthAdjust="spacingAndGlyphs">L Shell</text>

<text transform="translate(786,582) rotate(-90)" style="font-size:10px" textLength="44" lengthAdjust="spacingAndGlyphs">4 Oct 16</text>

<text class="s" x="721" y="40" textLength="9" lengthAdjust="spacingAndGlyphs">10</text>
<text x="731" y="37" textLength="8" lengthAdjust="spacingAndGlyphs">5</text>
<text class="s" x="721" y="196" textLength="9" lengthAdjust="spacingAndGlyphs">10</text>
<text x="731" y="191" textLength="8" lengthAdjust="spacingAndGlyphs">4</text>
<text class="s" x="721" y="355" textLength="9" lengthAdjust="spacingAndGlyphs">10</text>
<text x="731" y="352" textLength="8" lengthAdjust="spacingAndGlyphs">3</text>
<text x="721" y="507" textLength="24" lengthAdjust="spacingAndGlyphs">100</text>

<text transform="translate(760,363) rotate(-90)" textLength="190" lengthAdjust="spacingAndGlyphs">LOG<tspan style="font-size:9px">10</tspan>(Total Starts per Scan)</text>
</svg>
</body></html>
